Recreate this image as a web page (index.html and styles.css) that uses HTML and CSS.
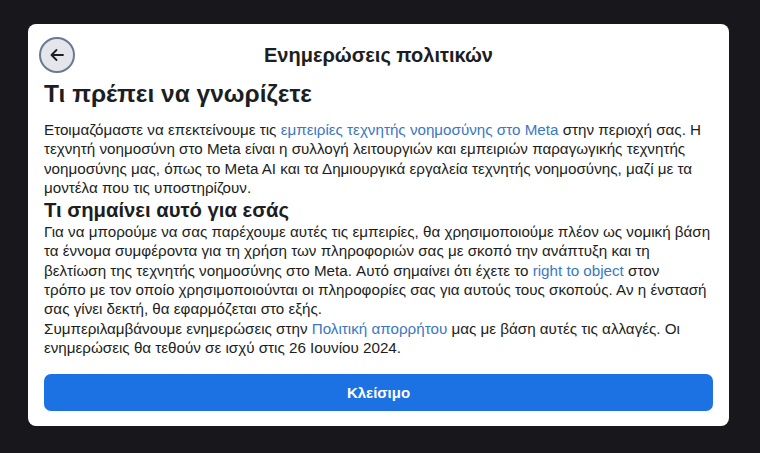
FILE: index.html
```html
<!DOCTYPE html>
<html lang="el">
<head>
<meta charset="utf-8">
<title>Ενημερώσεις πολιτικών</title>
<link rel="stylesheet" href="styles.css">
</head>
<body>
<div class="card">
  <div class="header">
    <button class="back" aria-label="Πίσω">
      <svg width="16" height="16" viewBox="0 0 16 16" fill="none" stroke="#1c1e21" stroke-width="1.8" stroke-linecap="round" stroke-linejoin="round"><path d="M14 8H2.5M7.5 3L2.5 8l5 5"/></svg>
    </button>
    <div class="title">Ενημερώσεις πολιτικών</div>
    <div class="spacer"></div>
  </div>
  <h1 class="h1">Τι πρέπει να γνωρίζετε</h1>
  <p class="text">Ετοιμαζόμαστε να επεκτείνουμε τις <a class="link">εμπειρίες τεχνητής νοημοσύνης στο Meta</a> στην περιοχή σας. Η<br>τεχνητή νοημοσύνη στο Meta είναι η συλλογή λειτουργιών και εμπειριών παραγωγικής τεχνητής<br>νοημοσύνης μας, όπως το Meta AI και τα Δημιουργικά εργαλεία τεχνητής νοημοσύνης, μαζί με τα<br>μοντέλα που τις υποστηρίζουν.</p>
  <h2 class="h2">Τι σημαίνει αυτό για εσάς</h2>
  <p class="text">Για να μπορούμε να σας παρέχουμε αυτές τις εμπειρίες, θα χρησιμοποιούμε πλέον ως νομική βάση<br>τα έννομα συμφέροντα για τη χρήση των πληροφοριών σας με σκοπό την ανάπτυξη και τη<br>βελτίωση της τεχνητής νοημοσύνης στο Meta. Αυτό σημαίνει ότι έχετε το <a class="link">right to object</a> στον<br>τρόπο με τον οποίο χρησιμοποιούνται οι πληροφορίες σας για αυτούς τους σκοπούς. Αν η ένστασή<br>σας γίνει δεκτή, θα εφαρμόζεται στο εξής.<br>Συμπεριλαμβάνουμε ενημερώσεις στην <a class="link">Πολιτική απορρήτου</a> μας με βάση αυτές τις αλλαγές. Οι<br>ενημερώσεις θα τεθούν σε ισχύ στις 26 Ιουνίου 2024.</p>
  <button class="close">Κλείσιμο</button>
</div>
</body>
</html>
```
FILE: styles.css
```css
html, body {
  margin: 0;
  padding: 0;
  background: #18171c;
}
body {
  padding: 24px 0 0 28px;
  font-family: "Liberation Sans", Arial, sans-serif;
  color: #1c1e21;
}
.card {
  width: 701px;
  box-sizing: border-box;
  background: #ffffff;
  border-radius: 8px;
  padding: 13px 16px 15px;
}
.header {
  display: grid;
  grid-template-columns: 36px 1fr 36px;
  align-items: center;
  height: 36px;
}
.back {
  width: 36px;
  height: 36px;
  box-sizing: border-box;
  border-radius: 50%;
  border: 2px solid #6a7a94;
  background: #e4e6eb;
  display: flex;
  align-items: center;
  justify-content: center;
  padding: 0;
  margin-left: -5px;
}
.title {
  text-align: center;
  font-weight: bold;
  font-size: 20px;
  line-height: 22px;
}
.h1 {
  margin: 7px 0 12px;
  font-size: 24.5px;
  line-height: 28px;
  font-weight: bold;
}
.h2 {
  margin: 1px 0 0;
  font-size: 20.3px;
  line-height: 24px;
  font-weight: bold;
}
.text {
  margin: 0;
  font-size: 15.2px;
  line-height: 19.3px;
  white-space: nowrap;
}
.link {
  color: #3a78c3;
}
.close {
  display: block;
  width: 100%;
  height: 37px;
  margin-top: 17px;
  border: none;
  border-radius: 7px;
  background: #1d72e3;
  color: #ffffff;
  font-family: "Liberation Sans", Arial, sans-serif;
  font-weight: bold;
  font-size: 15px;
}
```
